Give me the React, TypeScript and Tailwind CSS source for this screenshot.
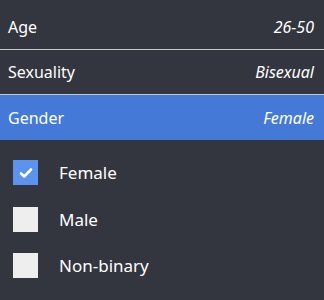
import React from "react"

const rows = [
    { label: "Age", value: "26-50", active: false },
    { label: "Sexuality", value: "Bisexual", active: false },
    { label: "Gender", value: "Female", active: true },
]

const options = [
    { label: "Female", checked: true },
    { label: "Male", checked: false },
    { label: "Non-binary", checked: false },
]

export default function App() {
    return (
        <div
            className="w-[324px] h-[300px] bg-[#33363f] text-white pt-[5px] overflow-hidden"
            style={{ fontFamily: '"Noto Sans", "Open Sans", sans-serif' }}
        >
            {rows.map((r, i) => (
                <div
                    key={r.label}
                    className={`h-[45px] flex items-center justify-between pl-2 pr-[10px] text-[16px] ${
                        r.active ? "bg-[#4479d8]" : ""
                    } ${i < rows.length - 1 ? "border-b border-[#c8c8c8]" : ""}`}
                >
                    <span>{r.label}</span>
                    <span className="italic">{r.value}</span>
                </div>
            ))}

            <div className="pt-5 pl-[13px] flex flex-col gap-[21px]">
                {options.map((o) => (
                    <label key={o.label} className="flex items-center gap-[21px] text-[17px]">
                        <span
                            className={`w-[25px] h-[25px] flex items-center justify-center ${
                                o.checked ? "bg-[#5b93ef]" : "bg-[#eeeeee]"
                            }`}
                        >
                            {o.checked && (
                                <svg width="14" height="14" viewBox="0 0 14 14" fill="none">
                                    <path d="M2 7.5l3.2 3L12 3.5" stroke="white" strokeWidth="2.6" strokeLinecap="round" strokeLinejoin="round" />
                                </svg>
                            )}
                        </span>
                        <span>{o.label}</span>
                    </label>
                ))}
            </div>
        </div>
    )
}
